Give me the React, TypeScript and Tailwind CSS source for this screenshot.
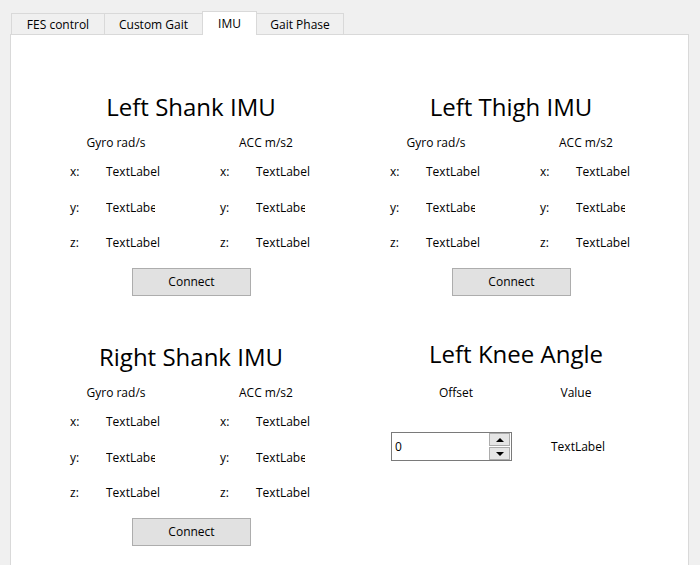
import React from "react";

const font = { fontFamily: '"Open Sans", "Noto Sans", sans-serif' };

function Row({ axis, clip }: { axis: string; clip?: boolean }) {
    const value = clip ? (
        <span className="block w-[49px] overflow-hidden whitespace-nowrap">TextLabel</span>
    ) : (
        <span className="whitespace-nowrap">TextLabel</span>
    );
    return (
        <div className="flex items-center pl-[39px] h-full">
            <div className="flex w-[150px] shrink-0">
                <span className="w-[36px]">{axis}:</span>
                {value}
            </div>
            <div className="flex w-[120px] shrink-0">
                <span className="w-[36px]">{axis}:</span>
                {value}
            </div>
        </div>
    );
}

function ImuPanel({ title }: { title: string }) {
    return (
        <div className="h-[250px] flex flex-col">
            <h2 className="h-8 leading-8 text-[24px] text-center">{title}</h2>
            <div className="mt-[12px] flex pl-[10px] h-4 leading-4">
                <div className="w-[150px] text-center">Gyro rad/s</div>
                <div className="w-[150px] text-center">ACC m/s2</div>
            </div>
            <div className="mt-[3px] flex flex-col">
                <div className="h-[36px]"><Row axis="x" /></div>
                <div className="h-[35px]"><Row axis="y" clip /></div>
                <div className="h-[35px]"><Row axis="z" /></div>
            </div>
            <button className="mt-[8px] ml-[101px] w-[119px] h-[28px] border border-[#adadad] bg-[#e1e1e1] text-black">
                Connect
            </button>
        </div>
    );
}

function KneePanel() {
    return (
        <div className="h-[250px] flex flex-col">
            <h2 className="-mt-[3px] h-8 leading-8 text-[24px] text-center pl-[10px]">Left Knee Angle</h2>
            <div className="mt-[15px] flex pl-[45px] h-4 leading-4">
                <div className="w-[120px] text-center">Offset</div>
                <div className="w-[120px] text-center">Value</div>
            </div>
            <div className="mt-[31px] flex items-center">
                <div className="ml-[40px] w-[121px] h-[29px] border border-[#7a7a7a] bg-white flex items-center">
                    <span className="pl-[3px] flex-1">0</span>
                    <div className="flex flex-col gap-px mr-px">
                        <div className="w-[21px] h-[13px] border border-[#acacac] bg-[#e5e5e5] flex items-center justify-center">
                            <svg width="8" height="4" viewBox="0 0 8 4"><path d="M0 4 L4 0 L8 4 Z" fill="#000" /></svg>
                        </div>
                        <div className="w-[21px] h-[13px] border border-[#acacac] bg-[#e5e5e5] flex items-center justify-center">
                            <svg width="8" height="4" viewBox="0 0 8 4"><path d="M0 0 L8 0 L4 4 Z" fill="#000" /></svg>
                        </div>
                    </div>
                </div>
                <span className="ml-[39px]">TextLabel</span>
            </div>
        </div>
    );
}

export default function App() {
    const tabs = ["FES control", "Custom Gait", "IMU", "Gait Phase"];
    return (
        <div className="w-[700px] h-[565px] overflow-hidden bg-[#f0f0f0] text-[12px] text-black" style={font}>
            <div className="flex items-end h-[35px] pl-[11px] -mb-px relative z-10">
                <div className="w-[93px] h-[21px] mb-px border-l border-t border-[#d9d9d9] bg-[#f0f0f0] flex items-center justify-center pt-px">{tabs[0]}</div>
                <div className="w-[98px] h-[21px] mb-px border-l border-t border-[#d9d9d9] bg-[#f0f0f0] flex items-center justify-center pt-px">{tabs[1]}</div>
                <div className="w-[55px] h-[24px] border-l border-t border-r border-[#d9d9d9] bg-white flex items-center justify-center">{tabs[2]}</div>
                <div className="w-[87px] h-[21px] mb-px border-t border-r border-[#d9d9d9] bg-[#f0f0f0] flex items-center justify-center pt-px">{tabs[3]}</div>
            </div>
            <div className="ml-[10px] w-[679px] h-[540px] border border-[#d9d9d9] bg-white pt-[56px] pl-[20px]">
                <div className="grid grid-cols-[320px_320px]">
                    <ImuPanel title="Left Shank IMU" />
                    <ImuPanel title="Left Thigh IMU" />
                    <ImuPanel title="Right Shank IMU" />
                    <KneePanel />
                </div>
            </div>
        </div>
    );
}
